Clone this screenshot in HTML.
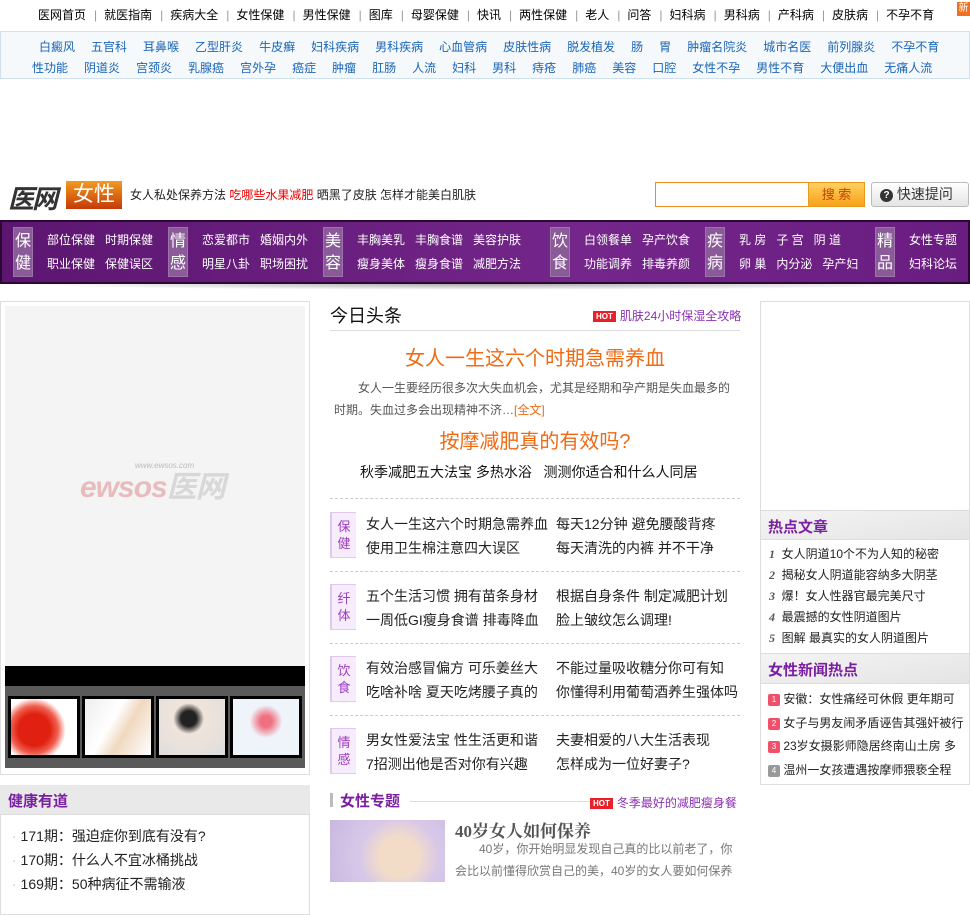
<!DOCTYPE html>
<html><head><meta charset="utf-8">
<style>
*{margin:0;padding:0;box-sizing:border-box}
body{width:970px;height:882px;overflow:hidden;background:#fff;font-family:"Liberation Sans","Noto Sans CJK SC",sans-serif;font-size:12px;color:#333;position:relative}
.a{position:absolute;white-space:nowrap}
.top{top:6px;left:38px;font-size:12px;color:#000}
.top span.s{color:#999;margin:0 7px 0 8px}
.kw{left:0;top:31px;width:970px;height:48px;border:1px solid #cfe0ee;background:#f5f9fc}
.kw div{position:absolute;left:0;white-space:nowrap;font-size:12px;color:#1a65b8}
.kw span{margin-right:16px}
.nav{left:0;top:220px;width:970px;height:64px;background:linear-gradient(90deg,#5c1670,#74268a 60%,#6a1d80);border:2px solid #2a0a33}
.cat{position:absolute;top:5px;width:20px;height:50px;background:#8a5b98;color:#fff;font-size:16px;line-height:22px;text-align:center;padding-top:3px;border:1px solid #9d74a9}
.nl{position:absolute;color:#fff;font-size:12px;white-space:nowrap}
.hd{color:#7b1fa2;font-weight:bold;font-size:15px}
.tag{position:absolute;left:330px;width:26px;height:46px;background:#f6ecfb;border-left:2px solid #e2c8ef;border-top:1px solid #e2c8ef;border-bottom:1px solid #e2c8ef;color:#9c3cbf;font-size:13px;line-height:17px;text-align:center;padding-top:5px}
.ml{position:absolute;font-size:14px;color:#222;white-space:nowrap}
.dash{position:absolute;left:330px;width:410px;border-top:1px dashed #ccc}
.hot{display:inline-block;background:#e8202a;color:#fff;font-size:8px;font-weight:bold;padding:0 3px;line-height:11px;vertical-align:middle;margin-right:4px}
</style></head><body>
<div class="a top">医网首页<span class="s">|</span>就医指南<span class="s">|</span>疾病大全<span class="s">|</span>女性保健<span class="s">|</span>男性保健<span class="s">|</span>图库<span class="s">|</span>母婴保健<span class="s">|</span>快讯<span class="s">|</span>两性保健<span class="s">|</span>老人<span class="s">|</span>问答<span class="s">|</span>妇科病<span class="s">|</span>男科病<span class="s">|</span>产科病<span class="s">|</span>皮肤病<span class="s">|</span>不孕不育</div>
<div class="a" style="left:957px;top:2px;width:13px;height:14px;background:#f07020;color:#fff;font-size:10px;line-height:14px;text-align:center">新</div>
<div class="a kw">
<div style="top:6px;left:38px"><span>白癜风</span><span>五官科</span><span>耳鼻喉</span><span>乙型肝炎</span><span>牛皮癣</span><span>妇科疾病</span><span>男科疾病</span><span>心血管病</span><span>皮肤性病</span><span>脱发植发</span><span>肠</span><span>胃</span><span>肿瘤名院炎</span><span>城市名医</span><span>前列腺炎</span><span>不孕不育</span></div>
<div style="top:27px;left:31px"><span>性功能</span><span>阴道炎</span><span>宫颈炎</span><span>乳腺癌</span><span>宫外孕</span><span>癌症</span><span>肿瘤</span><span>肛肠</span><span>人流</span><span>妇科</span><span>男科</span><span>痔疮</span><span>肺癌</span><span>美容</span><span>口腔</span><span>女性不孕</span><span>男性不育</span><span>大便出血</span><span>无痛人流</span></div>
</div>
<div class="a" style="left:8px;top:179px;font-size:26px;font-weight:bold;color:#333;font-style:italic;letter-spacing:-2px">医网</div>
<div class="a" style="left:66px;top:181px;width:56px;height:28px;background:linear-gradient(#f39a20,#c43a08);color:#fff;font-size:21px;line-height:28px;text-align:center">女性</div>
<div class="a" style="left:130px;top:186px;font-size:12px;color:#222">女人私处保养方法 <span style="color:#e00">吃哪些水果减肥</span> 晒黑了皮肤 怎样才能美白肌肤</div>
<div class="a" style="left:655px;top:182px;width:154px;height:25px;border:1px solid #f08a20;background:#fff"></div>
<div class="a" style="left:808px;top:182px;width:57px;height:25px;background:linear-gradient(#ffd060,#f7a218);border:1px solid #e89a20;color:#c0440a;font-size:13px;line-height:23px;text-align:center">搜 索</div>
<div class="a" style="left:871px;top:182px;width:98px;height:25px;border:1px solid #bbb;border-radius:3px;background:linear-gradient(#fff,#e4e4e4);font-size:14px;line-height:23px;color:#333;padding-left:8px"><span style="display:inline-block;width:13px;height:13px;border-radius:50%;background:#333;color:#fff;font-size:10px;line-height:13px;text-align:center;font-weight:bold;vertical-align:1px">?</span> 快速提问</div>
<div class="a nav">
<div class="cat" style="left:11px">保<br>健</div>
<div class="nl" style="left:45px;top:9px">部位保健 &nbsp; 时期保健</div><div class="nl" style="left:45px;top:33px">职业保健 &nbsp; 保健误区</div>
<div class="cat" style="left:166px">情<br>感</div>
<div class="nl" style="left:200px;top:9px">恋爱都市 &nbsp; 婚姻内外</div><div class="nl" style="left:200px;top:33px">明星八卦 &nbsp; 职场困扰</div>
<div class="cat" style="left:321px">美<br>容</div>
<div class="nl" style="left:355px;top:9px">丰胸美乳 &nbsp; 丰胸食谱 &nbsp; 美容护肤</div><div class="nl" style="left:355px;top:33px">瘦身美体 &nbsp; 瘦身食谱 &nbsp; 减肥方法</div>
<div class="cat" style="left:548px">饮<br>食</div>
<div class="nl" style="left:582px;top:9px">白领餐单 &nbsp; 孕产饮食</div><div class="nl" style="left:582px;top:33px">功能调养 &nbsp; 排毒养颜</div>
<div class="cat" style="left:703px">疾<br>病</div>
<div class="nl" style="left:737px;top:9px">乳 房 &nbsp; 子 宫 &nbsp; 阴 道</div><div class="nl" style="left:737px;top:33px">卵 巢 &nbsp; 内分泌 &nbsp; 孕产妇</div>
<div class="cat" style="left:873px">精<br>品</div>
<div class="nl" style="left:907px;top:9px">女性专题</div><div class="nl" style="left:907px;top:33px">妇科论坛</div>
</div>
<div class="a" style="left:20px;top:284px;width:930px;height:6px;background:radial-gradient(ellipse at top,#aaa,rgba(255,255,255,0) 70%)"></div>

<!-- left -->
<div class="a" style="left:0;top:301px;width:310px;height:474px;border:1px solid #ddd"></div>
<div class="a" style="left:5px;top:306px;width:300px;height:360px;background:#f4f4f4"></div>
<div class="a" style="left:80px;top:462px;font-size:30px;font-style:italic;font-weight:bold;color:#e8bcbc;letter-spacing:-1px">ewsos<span style="color:#d8d8d8">医网</span></div>
<div class="a" style="left:135px;top:461px;font-size:8px;color:#bbb;font-style:italic">www.ewsos.com</div>
<div class="a" style="left:5px;top:666px;width:300px;height:20px;background:#000"></div>
<div class="a" style="left:5px;top:686px;width:300px;height:82px;background:#5a5a5a"></div>
<div class="a" style="left:8px;top:696px;width:72px;height:62px;background:#000;padding:3px"><div style="width:100%;height:100%;background:radial-gradient(circle at 35% 55%,#e02010 30%,#f06050 45%,#fff 60%)"></div></div>
<div class="a" style="left:82px;top:696px;width:72px;height:62px;background:#000;padding:3px"><div style="width:100%;height:100%;background:linear-gradient(120deg,#eee,#fff 40%,#f0d8c0 60%,#fff)"></div></div>
<div class="a" style="left:156px;top:696px;width:72px;height:62px;background:#000;padding:3px"><div style="width:100%;height:100%;background:radial-gradient(circle at 45% 35%,#222 15%,#f0e4dc 30%,#ddd)"></div></div>
<div class="a" style="left:230px;top:696px;width:72px;height:62px;background:#000;padding:3px"><div style="width:100%;height:100%;background:radial-gradient(circle at 50% 40%,#f07080 12%,#eef4fa 35%)"></div></div>
<div class="a" style="left:0;top:785px;width:310px;height:30px;background:#e9e9e9;border-bottom:1px solid #ddd"></div>
<div class="a hd" style="left:8px;top:790px">健康有道</div>
<div class="a" style="left:0;top:815px;width:310px;height:100px;border:1px solid #ddd;border-top:0"></div>
<div class="a" style="left:12px;top:824px;font-size:14px;color:#222;line-height:24px"><span style="color:#ccc">·</span> 171期：强迫症你到底有没有?<br><span style="color:#ccc">·</span> 170期：什么人不宜冰桶挑战<br><span style="color:#ccc">·</span> 169期：50种病征不需输液</div>

<!-- middle -->
<div class="a" style="left:330px;top:302px;font-size:18px;color:#111">今日头条</div>
<div class="a" style="left:593px;top:307px;font-size:12px;color:#8a2fb0"><span class="hot">HOT</span>肌肤24小时保湿全攻略</div>
<div class="a" style="left:330px;top:330px;width:410px;border-top:1px solid #ddd"></div>
<div class="a" style="left:330px;width:410px;text-align:center;top:342px;font-size:20px;color:#f06a14">女人一生这六个时期急需养血</div>
<div class="a" style="left:334px;top:377px;width:404px;white-space:normal;font-size:12px;color:#555;line-height:22px;text-indent:24px">女人一生要经历很多次大失血机会，尤其是经期和孕产期是失血最多的时期。失血过多会出现精神不济…<span style="color:#f06a14">[全文]</span></div>
<div class="a" style="left:330px;width:410px;text-align:center;top:425px;font-size:20px;color:#f06a14">按摩减肥真的有效吗?</div>
<div class="a" style="left:360px;top:462px;font-size:14px;color:#111">秋季减肥五大法宝 多热水浴 &nbsp; 测测你适合和什么人同居</div>
<div class="dash" style="top:498px"></div>
<div class="tag" style="top:512px">保<br>健</div>
<div class="ml" style="left:366px;top:514px">女人一生这六个时期急需养血</div><div class="ml" style="left:556px;top:514px">每天12分钟 避免腰酸背疼</div>
<div class="ml" style="left:366px;top:538px">使用卫生棉注意四大误区</div><div class="ml" style="left:556px;top:538px">每天清洗的内裤 并不干净</div>
<div class="dash" style="top:571px"></div>
<div class="tag" style="top:584px">纤<br>体</div>
<div class="ml" style="left:366px;top:586px">五个生活习惯 拥有苗条身材</div><div class="ml" style="left:556px;top:586px">根据自身条件 制定减肥计划</div>
<div class="ml" style="left:366px;top:610px">一周低GI瘦身食谱 排毒降血</div><div class="ml" style="left:556px;top:610px">脸上皱纹怎么调理!</div>
<div class="dash" style="top:643px"></div>
<div class="tag" style="top:656px">饮<br>食</div>
<div class="ml" style="left:366px;top:658px">有效治感冒偏方 可乐姜丝大</div><div class="ml" style="left:556px;top:658px">不能过量吸收糖分你可有知</div>
<div class="ml" style="left:366px;top:682px">吃啥补啥 夏天吃烤腰子真的</div><div class="ml" style="left:556px;top:682px">你懂得利用葡萄酒养生强体吗</div>
<div class="dash" style="top:715px"></div>
<div class="tag" style="top:728px">情<br>感</div>
<div class="ml" style="left:366px;top:730px">男女性爱法宝 性生活更和谐</div><div class="ml" style="left:556px;top:730px">夫妻相爱的八大生活表现</div>
<div class="ml" style="left:366px;top:754px">7招测出他是否对你有兴趣</div><div class="ml" style="left:556px;top:754px">怎样成为一位好妻子?</div>
<div class="a" style="left:330px;top:793px;width:3px;height:14px;background:#bbb"></div>
<div class="a hd" style="left:340px;top:790px">女性专题</div>
<div class="a" style="left:410px;top:801px;width:180px;border-top:1px solid #ddd"></div>
<div class="a" style="left:590px;top:794px;font-size:12px;color:#8a2fb0"><span class="hot">HOT</span>冬季最好的减肥瘦身餐</div>
<div class="a" style="left:330px;top:820px;width:115px;height:62px;background:radial-gradient(circle at 60% 60%,#f2dcc8 25%,#d8c8e8 50%,#c8b8e0)"></div>
<div class="a" style="left:455px;top:817px;font-size:17px;font-weight:bold;color:#555;font-family:'Liberation Serif','Noto Serif CJK SC',serif">40岁女人如何保养</div>
<div class="a" style="left:455px;top:838px;width:285px;white-space:normal;font-size:12px;color:#777;line-height:22px;text-indent:24px">40岁，你开始明显发现自己真的比以前老了，你会比以前懂得欣赏自己的美，40岁的女人要如何保养</div>

<!-- right -->
<div class="a" style="left:760px;top:301px;width:210px;height:484px;border:1px solid #ddd"></div>
<div class="a" style="left:761px;top:510px;width:208px;height:30px;background:linear-gradient(170deg,#f4f4f4,#e4e4e4);border-top:1px solid #ddd;border-bottom:1px solid #ddd"></div>
<div class="a hd" style="left:768px;top:516px">热点文章</div>
<div class="a" style="left:769px;top:544px;font-size:12px;color:#222;line-height:21px"><i style="color:#555;font-weight:bold;font-family:'Liberation Serif',serif">1</i> &nbsp;女人阴道10个不为人知的秘密<br><i style="color:#555;font-weight:bold;font-family:'Liberation Serif',serif">2</i> &nbsp;揭秘女人阴道能容纳多大阴茎<br><i style="color:#555;font-weight:bold;font-family:'Liberation Serif',serif">3</i> &nbsp;爆！女人性器官最完美尺寸<br><i style="color:#555;font-weight:bold;font-family:'Liberation Serif',serif">4</i> &nbsp;最震撼的女性阴道图片<br><i style="color:#555;font-weight:bold;font-family:'Liberation Serif',serif">5</i> &nbsp;图解 最真实的女人阴道图片</div>
<div class="a" style="left:761px;top:653px;width:208px;height:31px;background:linear-gradient(170deg,#f4f4f4,#e4e4e4);border-top:1px solid #ddd;border-bottom:1px solid #ddd"></div>
<div class="a hd" style="left:768px;top:659px">女性新闻热点</div>
<div class="a" style="left:768px;top:688px;font-size:12px;color:#222;line-height:23.5px;width:200px;overflow:hidden">
<span style="display:inline-block;width:12px;height:12px;background:#f0506a;color:#fff;font-size:8px;line-height:12px;text-align:center;vertical-align:1px;border-radius:2px">1</span> 安徽：女性痛经可休假 更年期可<br>
<span style="display:inline-block;width:12px;height:12px;background:#f0506a;color:#fff;font-size:8px;line-height:12px;text-align:center;vertical-align:1px;border-radius:2px">2</span> 女子与男友闹矛盾诬告其强奸被行<br>
<span style="display:inline-block;width:12px;height:12px;background:#f0506a;color:#fff;font-size:8px;line-height:12px;text-align:center;vertical-align:1px;border-radius:2px">3</span> 23岁女摄影师隐居终南山土房 多<br>
<span style="display:inline-block;width:12px;height:12px;background:#999;color:#fff;font-size:8px;line-height:12px;text-align:center;vertical-align:1px;border-radius:2px">4</span> 温州一女孩遭遇按摩师猥亵全程</div>
</body></html>
